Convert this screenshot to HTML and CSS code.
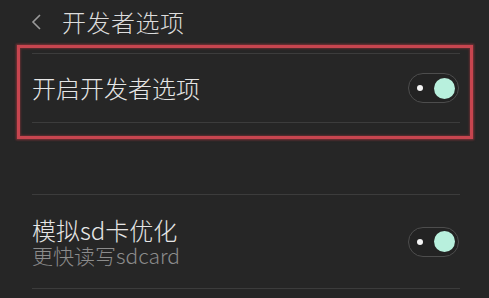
FILE: index.html
```html
<!DOCTYPE html>
<html lang="zh-CN">
<head>
<meta charset="utf-8">
<link rel="stylesheet" href="styles.css">
</head>
<body>
<header class="topbar">
  <svg class="back" width="12" height="18" viewBox="0 0 12 18"><polyline points="9,2 2,9 9,16" fill="none" stroke="#9a9a9a" stroke-width="1.6"/></svg>
  <h1 class="title">开发者选项</h1>
</header>
<section class="highlight">
  <div class="row row-main">
    <span class="label">开启开发者选项</span>
    <span class="toggle"><span class="dot"></span><span class="knob"></span></span>
  </div>
</section>
<section class="group">
  <div class="row row-two">
    <div class="texts">
      <span class="label label-two">模拟sd卡优化</span>
      <span class="sub">更快读写sdcard</span>
    </div>
    <span class="toggle"><span class="dot"></span><span class="knob"></span></span>
  </div>
</section>
</body>
</html>
```

FILE: styles.css
```css
html, body {
  margin: 0;
  padding: 0;
  background: #262626;
  font-family: "Noto Sans CJK SC", "Noto Sans", sans-serif;
  color: #e2e2e2;
  height: 298px;
  overflow: hidden;
}
.topbar {
  height: 44px;
  display: flex;
  align-items: center;
  padding-left: 31px;
  box-sizing: border-box;
}
.back {
  display: block;
  margin-right: 19px;
}
.title {
  margin: 0;
  font-size: 24px;
  font-weight: 300;
  color: #dcdcdc;
  line-height: 1;
  letter-spacing: 0.5px;
}
.highlight {
  margin: 1px 0 0 17px;
  width: 456px;
  box-sizing: border-box;
  border: 3px solid #c7454f;
  box-shadow: 0 0 2px 1px rgba(200, 60, 70, 0.55), inset 0 0 2px 1px rgba(200, 60, 70, 0.35);
  padding: 5px 10px 13px 12px;
}
.row {
  display: flex;
  align-items: center;
  justify-content: space-between;
  border-top: 1px solid #3c3c3c;
  border-bottom: 1px solid #3c3c3c;
}
.row-main {
  height: 70px;
  box-sizing: border-box;
  padding-right: 1px;
}
.label {
  font-size: 24px;
  font-weight: 300;
  line-height: 1.1;
  color: #e6e6e6;
}
.label-two {
  line-height: 27px;
}
.group {
  margin-top: 55px;
  padding: 0 29px 0 32px;
}
.row-two {
  height: 95px;
  box-sizing: border-box;
  padding-right: 1px;
}
.texts {
  display: flex;
  flex-direction: column;
}
.sub {
  font-size: 21px;
  font-weight: 300;
  line-height: 24px;
  color: #8c8c8c;
}
.toggle {
  position: relative;
  width: 51px;
  height: 30px;
  box-sizing: border-box;
  border: 1.5px solid #4d4d4d;
  border-radius: 15px;
  background: #232323;
  display: flex;
  align-items: center;
}
.dot {
  width: 6px;
  height: 6px;
  border-radius: 50%;
  background: #f4f4f4;
  margin-left: 7.5px;
}
.knob {
  width: 21px;
  height: 21px;
  border-radius: 50%;
  background: #b8f0dd;
  margin-left: 11px;
}
```
